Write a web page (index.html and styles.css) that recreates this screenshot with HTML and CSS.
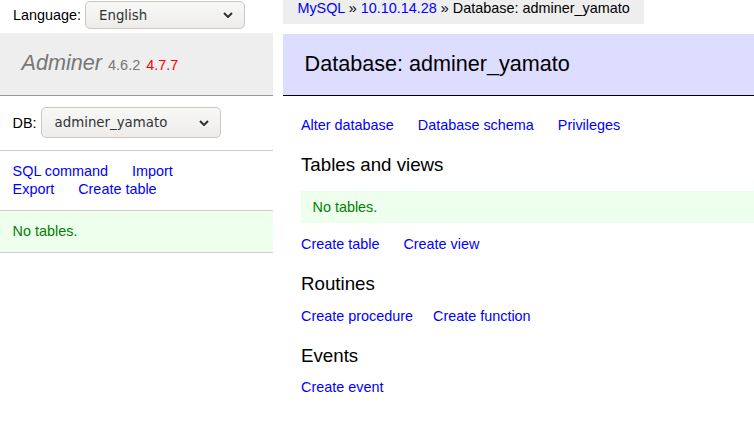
FILE: index.html
```html
<!DOCTYPE html>
<html lang="en">
<head>
<meta charset="utf-8">
<title>Database: adminer_yamato - Adminer</title>
<link rel="stylesheet" href="styles.css">
</head>
<body>
<div class="page">
  <aside class="menu">
    <form class="lang">
      <label class="field-label" for="lang">Language:</label>
      <span class="select-wrap lang-select">
        <select id="lang"><option>English</option></select>
        <svg class="chevron" width="10" height="6" viewBox="0 0 10 6" aria-hidden="true"><path d="M1 1 L5 5 L9 1" fill="none" stroke="#2e3436" stroke-width="2"/></svg>
      </span>
    </form>
    <h1><a class="brand" href="#">Adminer</a> <span class="version">4.6.2</span> <a class="new-version" href="#">4.7.7</a></h1>
    <form class="menu-block db-row">
      <label class="field-label" for="db">DB:</label>
      <span class="select-wrap db-select">
        <select id="db"><option>adminer_yamato</option></select>
        <svg class="chevron" width="10" height="6" viewBox="0 0 10 6" aria-hidden="true"><path d="M1 1 L5 5 L9 1" fill="none" stroke="#2e3436" stroke-width="2"/></svg>
      </span>
    </form>
    <p class="menu-block links"><a href="#">SQL command</a> <a href="#">Import</a><br><a href="#">Export</a> <a href="#">Create table</a></p>
    <p class="menu-block menu-message">No tables.</p>
  </aside>
  <main class="main">
    <div class="breadcrumb"><a href="#">MySQL</a> » <a href="#">10.10.14.28</a> » Database: adminer_yamato</div>
    <h2>Database: adminer_yamato</h2>
    <div class="content">
      <p class="links"><a href="#">Alter database</a> <a href="#">Database schema</a> <a href="#">Privileges</a></p>
      <h3>Tables and views</h3>
      <p class="message">No tables.</p>
      <p class="links after-message"><a href="#">Create table</a> <a href="#">Create view</a></p>
      <h3>Routines</h3>
      <p class="links"><a href="#">Create procedure</a><a href="#">Create function</a></p>
      <h3>Events</h3>
      <p class="links"><a href="#">Create event</a></p>
    </div>
  </main>
</div>
</body>
</html>
```

FILE: styles.css
```css
html, body {
  margin: 0;
  padding: 0;
  background: #fff;
}

body {
  color: #000;
  font: 14.4px/1.25 "Liberation Sans", Arial, Helvetica, sans-serif;
}

a {
  color: blue;
  text-decoration: none;
}

.page {
  display: grid;
  grid-template-columns: 273px 1fr;
  column-gap: 10px;
  align-items: start;
}

/* ---------- sidebar ---------- */

.menu {
  display: flex;
  flex-direction: column;
}

.lang {
  box-sizing: border-box;
  height: 33px;
  margin: 0;
  padding: 1px 13px 0;
  display: flex;
  align-items: flex-start;
  gap: 4px;
}

.field-label {
  line-height: 28px;
}

.select-wrap {
  position: relative;
  display: inline-block;
}

.select-wrap select {
  -webkit-appearance: none;
  appearance: none;
  box-sizing: border-box;
  margin: 0;
  padding: 0 30px 0 13px;
  border: 1px solid #cdc7c2;
  border-radius: 5px;
  background: linear-gradient(#f8f8f7, #edecea);
  color: #2e3436;
  font: 13.33px "DejaVu Sans", sans-serif;
  text-align: left;
}

.lang-select select {
  width: 160px;
  height: 28px;
}

.db-select select {
  width: 180px;
  height: 31px;
}

.chevron {
  position: absolute;
  right: 12px;
  top: 50%;
  margin-top: -3px;
  pointer-events: none;
}

h1 {
  margin: 0;
  padding: 17.28px 21.6px;
  font-size: 21.6px;
  font-weight: normal;
  line-height: 1.25;
  color: #777;
  background: #eee;
  border-bottom: 1px solid #999;
}

.brand {
  color: #777;
  font-style: italic;
}

.version {
  color: #777;
  font-size: 67%;
}

.new-version {
  color: red;
  font-size: 67%;
}

.menu-block {
  margin: 0;
  padding: 11.52px 12.6px;
  border-bottom: 1px solid #ccc;
}

.db-row {
  display: flex;
  align-items: center;
  gap: 4px;
}

.links a {
  white-space: nowrap;
  margin-right: 20px;
}

.menu-message {
  color: green;
  background: #efe;
}

/* ---------- main ---------- */

.main {
  min-width: 0;
}

.breadcrumb {
  box-sizing: border-box;
  width: fit-content;
  height: 23.5px;
  margin-bottom: 10px;
  padding: 0 14.4px;
  background: #eee;
  line-height: normal;
  white-space: nowrap;
}

h2 {
  margin: 0 0 20px;
  padding: 17.28px 21.6px;
  font-size: 21.6px;
  font-weight: normal;
  line-height: 1.25;
  color: #000;
  background: #ddf;
  border-bottom: 1px solid #000;
}

.content {
  padding-left: 18px;
}

.content p {
  margin: 11.52px 20px 0 0;
}

.content .after-message {
  margin-top: 12.3px;
}

h3 {
  margin: 18.72px 0 0;
  font-size: 18.72px;
  font-weight: normal;
  line-height: 1.25;
}

.content .message {
  margin: 14.4px 0 0;
  padding: 7.2px 11.52px;
  color: green;
  background: #efe;
}
```
